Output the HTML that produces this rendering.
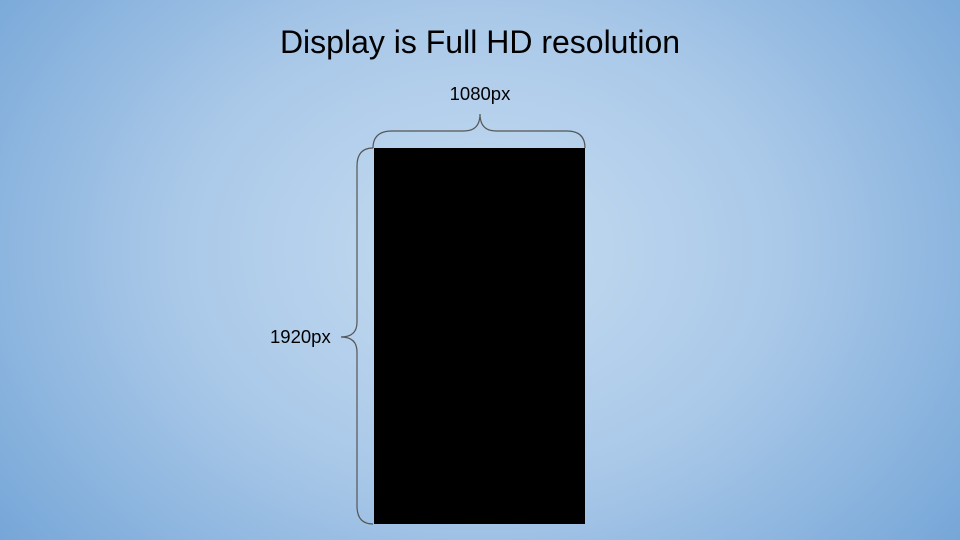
<!DOCTYPE html>
<html><head><style>
html,body{margin:0;padding:0}
body{width:960px;height:540px;overflow:hidden;position:relative;font-family:"Liberation Sans",Arial,sans-serif;
background:radial-gradient(ellipse 620px 480px at 480px 250px,#c6dcf1 0%,#a9c8e8 50%,#74a5d7 100%);}
.t{position:absolute;color:#000;white-space:nowrap}
</style></head><body>
<div class="t" style="left:0;width:960px;text-align:center;top:24px;font-size:32px;">Display is Full HD resolution</div>
<div class="t" style="left:430px;width:100px;text-align:center;top:83px;font-size:18.5px;">1080px</div>
<div class="t" style="left:270px;top:326px;font-size:18.5px;">1920px</div>
<div style="position:absolute;left:374px;top:148px;width:211px;height:376px;background:#000"></div>
<svg width="960" height="540" style="position:absolute;left:0;top:0" fill="none" stroke="#555" stroke-width="1.2">
<path d="M373 148 Q373 131 392 131 L464 131 Q480 131 480 114 Q480 131 496 131 L567 131 Q585 131 585 148"/>
<path d="M373 148 Q357 148 357 166 L357 322 Q357 337 341 337 Q357 337 357 352 L357 506 Q357 524 373 524"/>
</svg>
</body></html>
